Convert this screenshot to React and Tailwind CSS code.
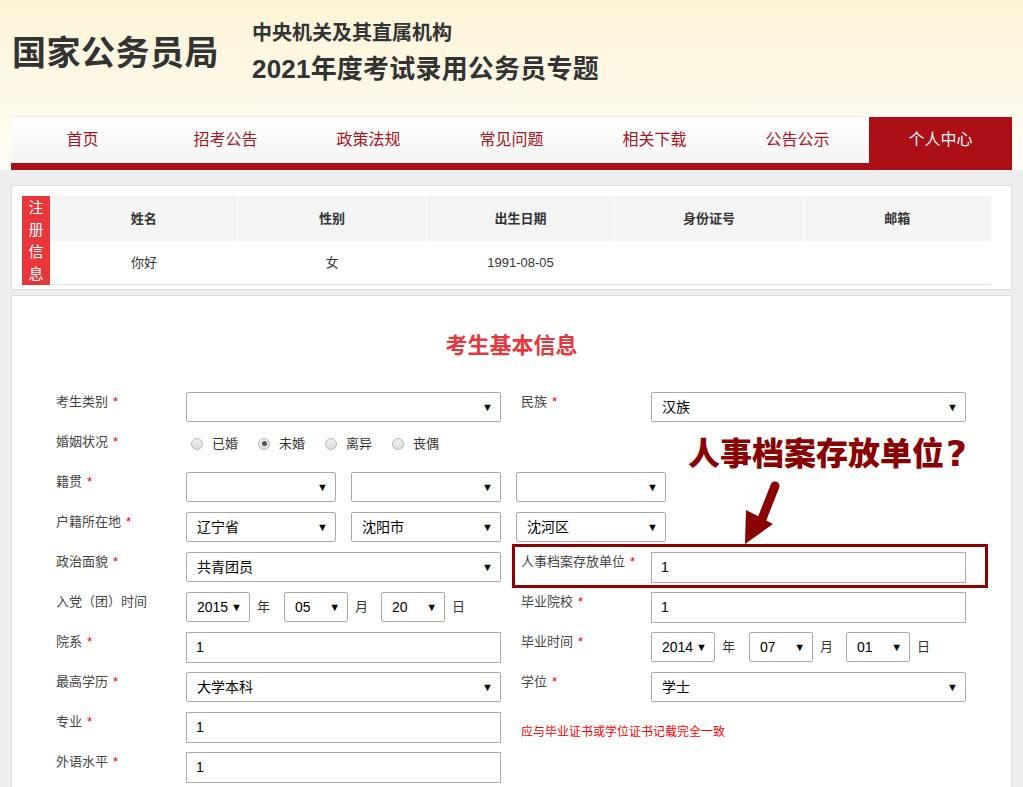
import React from 'react';

const FONT = { fontFamily: '"Liberation Sans", "Noto Sans CJK SC", sans-serif' };

const navItems = ['首页', '招考公告', '政策法规', '常见问题', '相关下载', '公告公示', '个人中心'];
const regCols = ['姓名', '性别', '出生日期', '身份证号', '邮箱'];
const regData = ['你好', '女', '1991-08-05', '', ''];

const Star = () => <span className="text-[#e60012] ml-[5px]">*</span>;

const Label = ({ text, star = true, w = 'w-[130px]' }) => (
    <div className={`${w} shrink-0 pt-[1px] text-[13px] text-[#444] leading-[18px]`}>
        {text}{star && <Star />}
    </div>
);

const Select = ({ value = '', w = 'w-[315px]' }) => (
    <div className={`${w} h-[30px] shrink-0 border border-[#aaa] rounded-[2px] bg-white flex items-center pl-[10px] pr-[7px]`}>
        <span className="flex-1 text-[14px] text-black pt-[1px]">{value}</span>
        <span className="text-[11px] text-black leading-none">▼</span>
    </div>
);

const Input = ({ value = '', w = 'w-[315px]' }) => (
    <div className={`${w} h-[31px] shrink-0 border border-[#aaa] bg-white flex items-center pl-[9px]`}>
        <span className="text-[14px] text-black">{value}</span>
    </div>
);

const Radio = ({ label, checked }) => (
    <div className="flex items-center mr-[20px]">
        <span className="w-[12px] h-[12px] rounded-full border border-[#b5b5b5] bg-gradient-to-b from-[#f2f2f2] to-[#dcdcdc] flex items-center justify-center">
            {checked && <span className="w-[5px] h-[5px] rounded-full bg-[#555]" />}
        </span>
        <span className="ml-[9px] text-[13px] text-[#333]">{label}</span>
    </div>
);

const DateSel = ({ y, m, d }) => (
    <div className="flex items-center self-start text-[13px] text-[#333]">
        <Select value={y} w="w-[64px]" />
        <span className="ml-[7px] mr-[14px]">年</span>
        <Select value={m} w="w-[64px]" />
        <span className="ml-[7px] mr-[13px]">月</span>
        <Select value={d} w="w-[64px]" />
        <span className="ml-[7px]">日</span>
    </div>
);

const Row = ({ left, right }) => (
    <div className="flex h-[40px]">
        <div className="w-[465px] shrink-0 flex">{left}</div>
        <div className="flex-1 flex relative">{right}</div>
    </div>
);

export default function App() {
    return (
        <div className="w-[1023px] min-h-[787px] bg-[#eeeeee] overflow-hidden" style={FONT}>
            {/* header */}
            <div className="h-[170px] bg-gradient-to-b from-[#fcf4d6] to-[#fffdf7] px-[11px]">
                <div className="h-[116px] flex items-center">
                    <div className="text-[34px] font-bold text-[#333] tracking-[0.5px] ml-[1px] mt-[-10px]">国家公务员局</div>
                    <div className="ml-[33px] mt-[-10px]">
                        <div className="text-[20px] font-bold text-[#333] leading-[28px]">中央机关及其直属机构</div>
                        <div className="text-[26px] font-bold text-[#333] leading-[36px] mt-[4px] tracking-[0.2px]">2021年度考试录用公务员专题</div>
                    </div>
                </div>
                <div className="h-[54px] border-t border-[#eee] bg-[#ad0f17]">
                    <div className="h-[46px] flex">
                        {navItems.map((n, i) => (
                            <div key={n} className={`flex-1 flex items-center justify-center text-[16px] ${i === 6 ? 'bg-[#ad0f17] text-white' : 'bg-gradient-to-b from-white to-[#f5f5f5] text-[#a8141c]'}`}>
                                {n}
                            </div>
                        ))}
                    </div>
                </div>
            </div>

            <div className="px-[11px] pt-[15px]">
                {/* registration info */}
                <div className="bg-white border border-[#ddd] pt-[10px] pl-[10px] pr-[20px] pb-[4px]">
                    <div className="flex">
                        <div className="w-[28px] bg-[#e8363b] text-white text-[15px] flex flex-col items-center justify-center leading-[22px]">
                            <span>注</span><span>册</span><span>信</span><span>息</span>
                        </div>
                        <div className="flex-1">
                            <div className="flex h-[45px] bg-[#f4f4f4]">
                                {regCols.map((c, i) => (
                                    <div key={c} className={`flex-1 flex items-center justify-center text-[13px] font-semibold text-[#333] ${i > 0 ? 'border-l border-white' : ''}`}>{c}</div>
                                ))}
                            </div>
                            <div className="flex h-[44px] border-b border-[#ddd]">
                                {regData.map((c, i) => (
                                    <div key={i} className="flex-1 flex items-center justify-center text-[13px] text-[#333]">{c}</div>
                                ))}
                            </div>
                        </div>
                    </div>
                </div>

                {/* basic info form */}
                <div className="bg-white border border-[#ddd] mt-[5px] pb-[10px] h-[500px]">
                    <div className="h-[96px] flex items-center justify-center text-[22px] font-bold text-[#e8363b] pt-[2px]">考生基本信息</div>
                    <div className="pl-[44px]">
                        <Row
                            left={<><Label text="考生类别" /><Select /></>}
                            right={<><Label text="民族" /><Select value="汉族" /></>}
                        />
                        <Row
                            left={<><Label text="婚姻状况" />
                                <div className="flex items-start pt-[2px] pl-[5px]">
                                    <Radio label="已婚" /><Radio label="未婚" checked /><Radio label="离异" /><Radio label="丧偶" />
                                </div></>}
                            right={
                                <div className="absolute left-[167px] top-[2px] text-[32px] font-black text-[#8b0000] leading-[40px] whitespace-nowrap z-10 flex items-center">
                                    人事档案存放单位<span className="text-[36px] ml-[2px]" style={{ fontFamily: '"DejaVu Sans", sans-serif' }}>?</span>
                                </div>
                            }
                        />
                        <Row
                            left={<><Label text="籍贯" /><div className="flex gap-[15px]"><Select w="w-[150px]" /><Select w="w-[150px]" /></div></>}
                            right={<>
                                <div className="absolute left-[-5px] top-0"><Select w="w-[150px]" /></div>
                                <svg className="absolute left-[222px] top-[8px] z-10" width="40" height="68" viewBox="0 0 40 68">
                                    <line x1="32" y1="6" x2="17" y2="44" stroke="#8b0000" strokeWidth="9" strokeLinecap="round" />
                                    <polygon points="2,64 3,30 30,44" fill="#8b0000" />
                                </svg>
                            </>}
                        />
                        <Row
                            left={<><Label text="户籍所在地" /><div className="flex gap-[15px]"><Select value="辽宁省" w="w-[150px]" /><Select value="沈阳市" w="w-[150px]" /></div></>}
                            right={<div className="absolute left-[-5px] top-0"><Select value="沈河区" w="w-[150px]" /></div>}
                        />
                        <Row
                            left={<><Label text="政治面貌" /><Select value="共青团员" /></>}
                            right={<>
                                <div className="absolute left-[-9px] top-[-8px] w-[476px] h-[44px] border-[3px] border-[#8b0000]" />
                                <Label text="人事档案存放单位" /><Input value="1" />
                            </>}
                        />
                        <Row
                            left={<><Label text="入党（团）时间" star={false} /><DateSel y="2015" m="05" d="20" /></>}
                            right={<><Label text="毕业院校" /><Input value="1" /></>}
                        />
                        <Row
                            left={<><Label text="院系" /><Input value="1" /></>}
                            right={<><Label text="毕业时间" /><DateSel y="2014" m="07" d="01" /></>}
                        />
                        <Row
                            left={<><Label text="最高学历" /><Select value="大学本科" /></>}
                            right={<><Label text="学位" /><Select value="学士" /></>}
                        />
                        <Row
                            left={<><Label text="专业" /><Input value="1" /></>}
                            right={<div className="pt-[11px] text-[12px] text-[#f00]">应与毕业证书或学位证书记载完全一致</div>}
                        />
                        <Row
                            left={<><Label text="外语水平" /><Input value="1" /></>}
                            right={null}
                        />
                    </div>
                </div>
            </div>
        </div>
    );
}
